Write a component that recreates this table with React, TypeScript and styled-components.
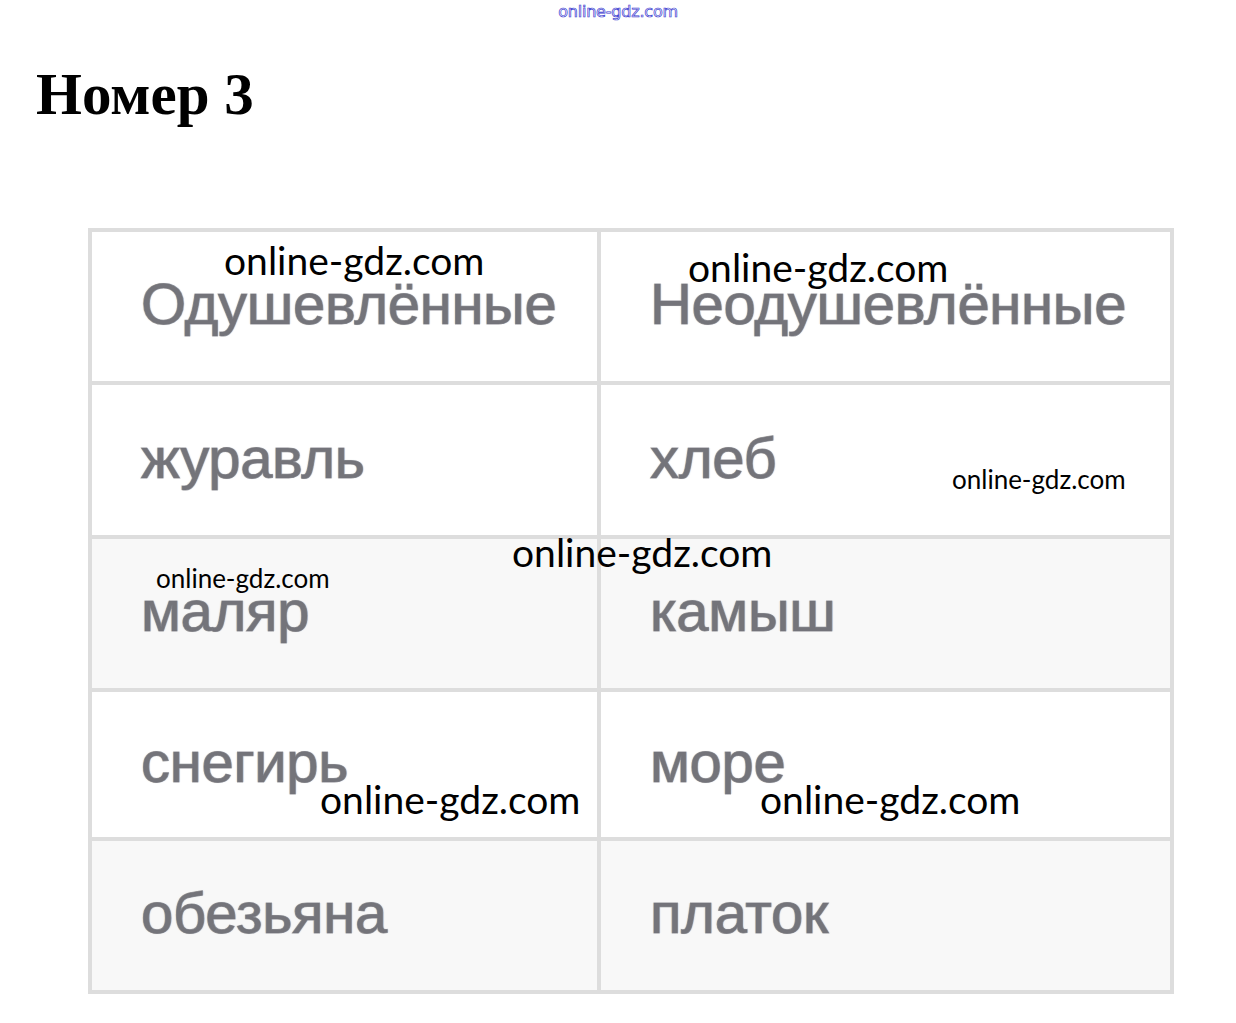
import React from "react";
import styled, { createGlobalStyle } from "styled-components";

const GlobalStyle = createGlobalStyle`
    html, body {
        margin: 0;
        padding: 0;
        background: #ffffff;
    }
`;

const Page = styled.div`
    position: relative;
    width: 1236px;
    min-height: 1023px;
    overflow: hidden;
`;

const SiteMark = styled.div`
    height: 22px;
    display: flex;
    justify-content: center;
    align-items: center;
    font-family: "DejaVu Sans", sans-serif;
    font-size: 16px;
    letter-spacing: -0.2px;
    color: #ffffff;
    -webkit-text-stroke: 0.7px #3a3ad0;
`;

const Title = styled.h1`
    margin: 42px 0 0 36px;
    font-family: "Liberation Serif", serif;
    font-weight: 700;
    font-size: 59px;
    line-height: 60px;
    color: #000;
`;

const Table = styled.div`
    margin: 104px 0 0 88px;
    width: 1086px;
    display: grid;
    grid-template-columns: 505px 569px;
    grid-template-rows: 149px 150px 149px 145px 149px;
    gap: 4px;
    padding: 4px;
    box-sizing: border-box;
    background: #dddddd;
`;

const Cell = styled.div<{ $shaded?: boolean }>`
    display: flex;
    align-items: center;
    padding: 0 0 6px 49px;
    background: ${(p) => (p.$shaded ? "#f8f8f8" : "#ffffff")};
    font-family: "Liberation Sans", Arial, sans-serif;
    font-size: 58px;
    letter-spacing: -0.3px;
    color: #74747a;
    -webkit-text-stroke: 1px rgba(116, 116, 122, 0.7);
    text-shadow: 1px 0 1px rgba(110, 150, 200, 0.45), -1px 0 1px rgba(210, 170, 110, 0.45);
`;

const Watermark = styled.div<{ $size: number }>`
    position: absolute;
    font-family: Lato, "Open Sans", sans-serif;
    font-size: ${(p) => p.$size}px;
    line-height: 1;
    color: #000;
    white-space: nowrap;
    pointer-events: none;
`;

const rows: [string, string][] = [
    ["Одушевлённые", "Неодушевлённые"],
    ["журавль", "хлеб"],
    ["маляр", "камыш"],
    ["снегирь", "море"],
    ["обезьяна", "платок"],
];

// baseline positions read off the reference, top = baseline - 0.87em
const marks = [
    { x: 224, base: 275, size: 39 },
    { x: 688, base: 282, size: 39 },
    { x: 952, base: 489, size: 26 },
    { x: 512, base: 567, size: 39 },
    { x: 156, base: 588, size: 26 },
    { x: 320, base: 814, size: 39 },
    { x: 760, base: 814, size: 39 },
];

export default function App() {
    return (
        <Page>
            <GlobalStyle />
            <SiteMark>online-gdz.com</SiteMark>
            <Title>Номер 3</Title>
            <Table>
                {rows.map(([a, b], i) => (
                    <React.Fragment key={i}>
                        <Cell $shaded={i === 2 || i === 4}>{a}</Cell>
                        <Cell $shaded={i === 2 || i === 4}>{b}</Cell>
                    </React.Fragment>
                ))}
            </Table>
            {marks.map((m, i) => (
                <Watermark
                    key={i}
                    $size={m.size}
                    style={{ left: m.x, top: m.base - Math.round(m.size * 0.87) }}
                >
                    online-gdz.com
                </Watermark>
            ))}
        </Page>
    );
}
